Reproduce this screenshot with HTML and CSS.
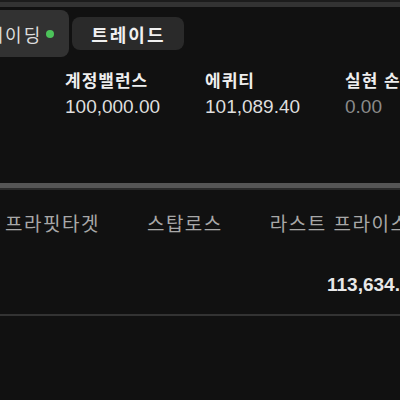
FILE: index.html
```html
<!DOCTYPE html>
<html lang="ko">
<head>
    <meta charset="UTF-8">
    <meta name="viewport" content="width=device-width, initial-scale=1.0">
    <title>트레이딩</title>
    <link rel="stylesheet" href="styles.css">
</head>
<body>
    <div class="top-strip"></div>

    <!-- tabs -->
    <div class="tab-bar">
        <div class="tab tab-active">트레이딩<span class="live-dot"></span></div>
        <div class="tab">트레이드</div>
    </div>

    <!-- account summary -->
    <div class="stats">
        <div class="stat">
            <div class="stat-label">계정밸런스</div>
            <div class="stat-value">100,000.00</div>
        </div>
        <div class="stat">
            <div class="stat-label">에퀴티</div>
            <div class="stat-value">101,089.40</div>
        </div>
        <div class="stat">
            <div class="stat-label">실현 손익</div>
            <div class="stat-value muted">0.00</div>
        </div>
    </div>

    <div class="divider"></div>

    <div class="table-head">
        <span>프라핏타겟</span>
        <span>스탑로스</span>
        <span>라스트 프라이스</span>
    </div>

    <div class="table-row">
        <span class="price">113,634.50</span>
    </div>
</body>
</html>
```

FILE: styles.css
```css
html, body {
    margin: 0;
    padding: 0;
}

body {
    width: 400px;
    height: 400px;
    overflow: hidden;
    background-color: #111111;
    color: #e6e6e6;
    font-family: 'Liberation Sans', 'Noto Sans CJK KR', sans-serif;
}

.top-strip {
    height: 5px;
    border-top: 2px solid #1c1c1c;
    background-color: #333333;
}

.tab-bar {
    display: flex;
    align-items: center;
    gap: 3px;
    padding-top: 3px;
    height: 47px;
}

.tab {
    display: flex;
    align-items: center;
    height: 33px;
    padding: 0 18px 0 19px;
    border-radius: 8px;
    background-color: #2a2a2a;
    font-size: 18px;
    font-weight: bold;
    letter-spacing: 2px;
    white-space: nowrap;
    color: #f0f0f0;
}

.tab-active {
    height: 47px;
    margin-left: -44px;
    padding: 0 15px 0 12px;
    border-radius: 0 8px 8px 0;
    background-color: #323232;
    font-weight: normal;
    color: #dddddd;
}

.live-dot {
    width: 8px;
    height: 8px;
    margin-left: 4px;
    border-radius: 50%;
    background-color: #4cc35a;
}

.stats {
    display: flex;
    padding: 15px 0 0 65px;
    height: 111px;
}

.stat {
    width: 140px;
    flex-shrink: 0;
    white-space: nowrap;
}

.stat-label {
    font-size: 17px;
    font-weight: bold;
    letter-spacing: 1px;
    line-height: 20px;
    color: #eeeeee;
}

.stat-value {
    margin-top: 4px;
    font-size: 19px;
    line-height: 22px;
    color: #dedede;
}

.stat-value.muted {
    color: #8a8a8a;
}

.divider {
    height: 5px;
    border-bottom: 2px solid #2a2a2a;
    background-color: #555555;
}

.table-head {
    display: flex;
    gap: 47px;
    padding: 23px 0 0 5px;
    height: 40px;
    font-size: 19px;
    letter-spacing: 1.5px;
    line-height: 24px;
    white-space: nowrap;
    color: #a8a8a8;
}

.table-row {
    height: 61px;
    padding-left: 327px;
    border-bottom: 2px solid #333333;
    white-space: nowrap;
}

.price {
    display: inline-block;
    margin-top: 21px;
    font-size: 19px;
    font-weight: bold;
    color: #e8e8e8;
}
```
